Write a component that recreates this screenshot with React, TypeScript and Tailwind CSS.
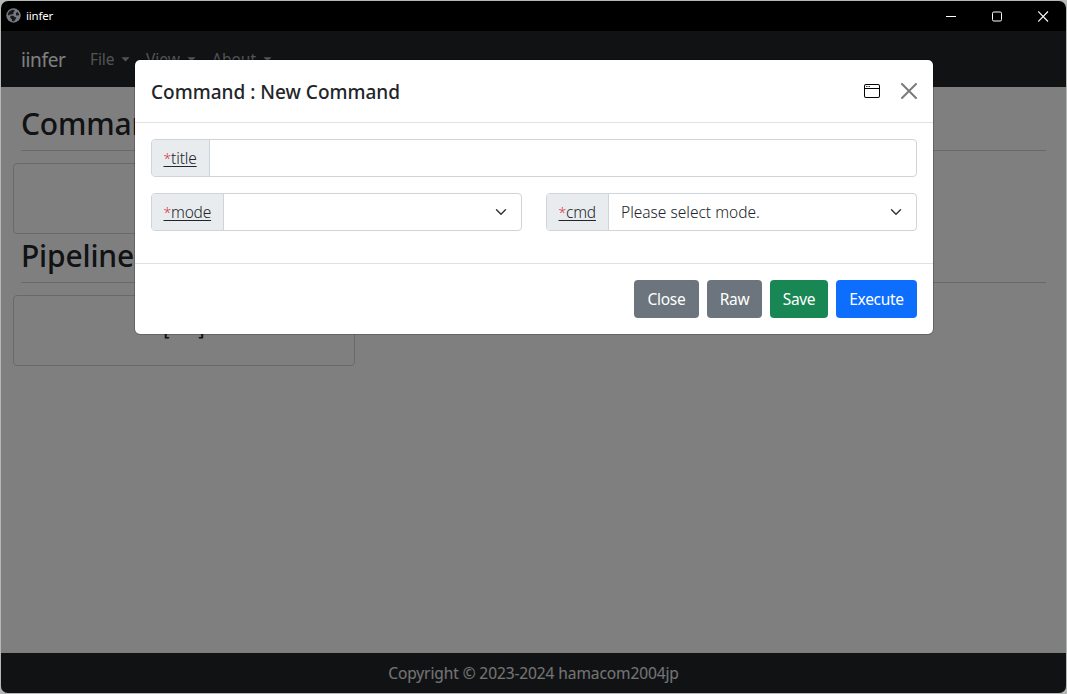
import React from "react";

function Caret() {
  return (
    <svg className="ml-[7px] h-[5px] w-[9px]" viewBox="0 0 9 5" fill="currentColor">
      <path d="M0.5 0.3h8L4.5 4.6z" />
    </svg>
  );
}

function NavItem({ label, className }: { label: string; className: string }) {
  return (
    <button className={`flex items-center text-[15.5px] leading-6 text-white/60 ${className}`}>
      <span>{label}</span>
      <Caret />
    </button>
  );
}

function Chevron() {
  return (
    <svg className="mr-0.5 h-3 w-3 shrink-0" viewBox="0 0 16 16" fill="none" stroke="#343a40" strokeWidth="2" strokeLinecap="round" strokeLinejoin="round">
      <path d="m2 5 6 6 6-6" />
    </svg>
  );
}

function Field({ label, labelClass, children }: { label: string; labelClass: string; children?: React.ReactNode }) {
  return (
    <label className="flex h-[38px] min-w-0 flex-1 overflow-hidden rounded-[4px] border border-[#ced4da] bg-white font-[350]">
      <span className={`flex shrink-0 items-center border-r border-[#ced4da] bg-[#e9ecef] pl-[11.5px] text-[15.5px] leading-6 text-[#212529] ${labelClass}`}>
        <span className="underline decoration-1 underline-offset-2">
          <span className="text-[14px] text-[#dc3545]">*</span>
          {label}
        </span>
      </span>
      <span className="flex flex-1 items-center justify-between pr-3 pl-3 text-[15.5px] leading-6 text-[#212529]">
        {children}
      </span>
    </label>
  );
}

function Section({ title, children }: { title: string; children?: React.ReactNode }) {
  return (
    <section>
      <div className="ml-5 mr-5 h-16 border-b border-[#d3d3d4] pt-[19px]">
        <h2 className="text-[30px] leading-[36px] font-medium tracking-[-0.18px]">{title}</h2>
      </div>
      <div className="mt-3 ml-3 flex h-[71px] w-[342px] items-center justify-center rounded-[4px] border border-[#d3d3d4] pb-1 text-[19px] font-medium">
        {children}
      </div>
    </section>
  );
}

export default function App() {
  return (
    <div className="h-[694px] w-[1067px] overflow-hidden bg-[#b5b8b7] p-px font-['Noto_Sans','Open_Sans',sans-serif] text-[#212529]">
      <div className="flex h-[692px] w-[1065px] flex-col overflow-hidden rounded-[7px] bg-black">
        <header className="flex h-[30px] shrink-0 items-center text-white">
          <svg className="mb-0.5 ml-[5px] h-[15px] w-[15px]" viewBox="0 0 15 15">
            <circle cx="7.5" cy="7.5" r="7.2" fill="#777b80" />
            <path d="M1.8 7C2 4 4.4 2 7.2 1.8L9 2.8 7.4 4.2 7.6 5.4 6 6.6H4L3.2 7.6z M4.6 7.8h3l1.2 1.4h1.6l-.6 1.6-1.6 2.4-2.4.1.2-1.9-1.8-1.6z M9.8 5.4l1.5-1.6 1.5 2 .3 1.7-1.7-.2-1.1.4z" fill="#16181a" />
          </svg>
          <span className="ml-[5px] flex-1 text-[11.5px] tracking-[-0.2px]">iinfer</span>
          <div className="flex h-full">
            <button className="flex w-[46px] items-center justify-center pl-px" aria-label="Minimize">
              <svg className="h-[11px] w-[11px]" viewBox="0 0 11 11" stroke="white" fill="none"><path d="M0 5.5h10" /></svg>
            </button>
            <button className="flex w-[46px] items-center justify-center pl-px" aria-label="Maximize">
              <svg className="h-[11px] w-[11px]" viewBox="0 0 11 11" stroke="white" fill="none"><rect x=".5" y="1" width="9" height="9" rx="1.3" /></svg>
            </button>
            <button className="flex w-[46px] items-center justify-center pl-px" aria-label="Close window">
              <svg className="h-[11px] w-[11px]" viewBox="0 0 11 11" stroke="white" strokeWidth="1.1" fill="none"><path d="m.2.5 9.8 10m0-10L.2 10.5" /></svg>
            </button>
          </div>
        </header>

        <div className="relative flex flex-1 flex-col bg-white">
          <nav className="flex h-14 shrink-0 items-center bg-[#212529] pl-5 text-white">
            <span className="w-[69px] pt-0.5 text-[19px] tracking-[-0.35px]">iinfer</span>
            <NavItem label="File" className="w-[56px] tracking-[-0.1px]" />
            <NavItem label="View" className="w-[66px]" />
            <NavItem label="About" className="" />
          </nav>
          <main className="flex-1">
            <Section title="Commands" />
            <div className="-mt-[15px]">
              <Section title="Pipelines"><span className="pl-0.5 tracking-[2px] whitespace-pre">[ + ]</span></Section>
            </div>
          </main>
          <footer className="flex h-10 shrink-0 items-center justify-center bg-[#212529] pt-0.5 text-[15.5px] text-white/90">
            <span className="tracking-[-0.1px]">Copyright © 2023-2024 hamacom2004jp</span>
          </footer>

          <div className="absolute inset-0 bg-black/50">
            <div role="dialog" className="mt-[29px] ml-[134px] h-[274px] w-[798px] rounded-[5px] bg-white outline outline-black/20">
              <div className="flex h-[63px] items-center border-b border-[#dee2e6] px-4">
                <h5 className="flex-1 pt-0.5 text-[19px] font-medium">Command : New Command</h5>
                <svg className="mr-[21px] h-4 w-4" viewBox="0 0 16 16" fill="#000">
                  <path d="M2.5 4a.5.5 0 1 0 0-1 .5.5 0 0 0 0 1m2-.5a.5.5 0 1 1-1 0 .5.5 0 0 1 1 0m1 .5a.5.5 0 1 0 0-1 .5.5 0 0 0 0 1" />
                  <path d="M2 1a2 2 0 0 0-2 2v10a2 2 0 0 0 2 2h12a2 2 0 0 0 2-2V3a2 2 0 0 0-2-2zm13 2v2H1V3a1 1 0 0 1 1-1h12a1 1 0 0 1 1 1M2 14a1 1 0 0 1-1-1V6h14v7a1 1 0 0 1-1 1z" />
                </svg>
                <svg className="h-4 w-4" viewBox="0 0 16 16" stroke="#7b7b7b" strokeWidth="2" strokeLinecap="round">
                  <path d="m1 1 14 14m0-14L1 15" />
                </svg>
              </div>
              <div className="flex h-[141px] flex-col gap-4 border-b border-[#dee2e6] px-4 pt-4">
                <div className="flex"><Field label="title" labelClass="w-[58px] tracking-[-0.15px]" /></div>
                <div className="flex gap-6">
                  <Field label="mode" labelClass="w-[72px] tracking-[-0.2px]"><span /><Chevron /></Field>
                  <Field label="cmd" labelClass="w-[62px] tracking-[-0.2px]"><span>Please select mode.</span><Chevron /></Field>
                </div>
              </div>
              <div className="flex justify-end gap-2 px-4 pt-4 text-[15.5px] tracking-[-0.3px] text-white">
                <button className="h-[38px] w-[65px] rounded-[4px] bg-[#6c757d] pt-0.5">Close</button>
                <button className="h-[38px] w-[55px] rounded-[4px] bg-[#6c757d] pt-0.5">Raw</button>
                <button className="h-[38px] w-[58px] rounded-[4px] bg-[#198754] pt-0.5">Save</button>
                <button className="h-[38px] w-[81px] rounded-[4px] bg-[#0d6efd] pt-0.5">Execute</button>
              </div>
            </div>
          </div>
        </div>
      </div>
    </div>
  );
}
